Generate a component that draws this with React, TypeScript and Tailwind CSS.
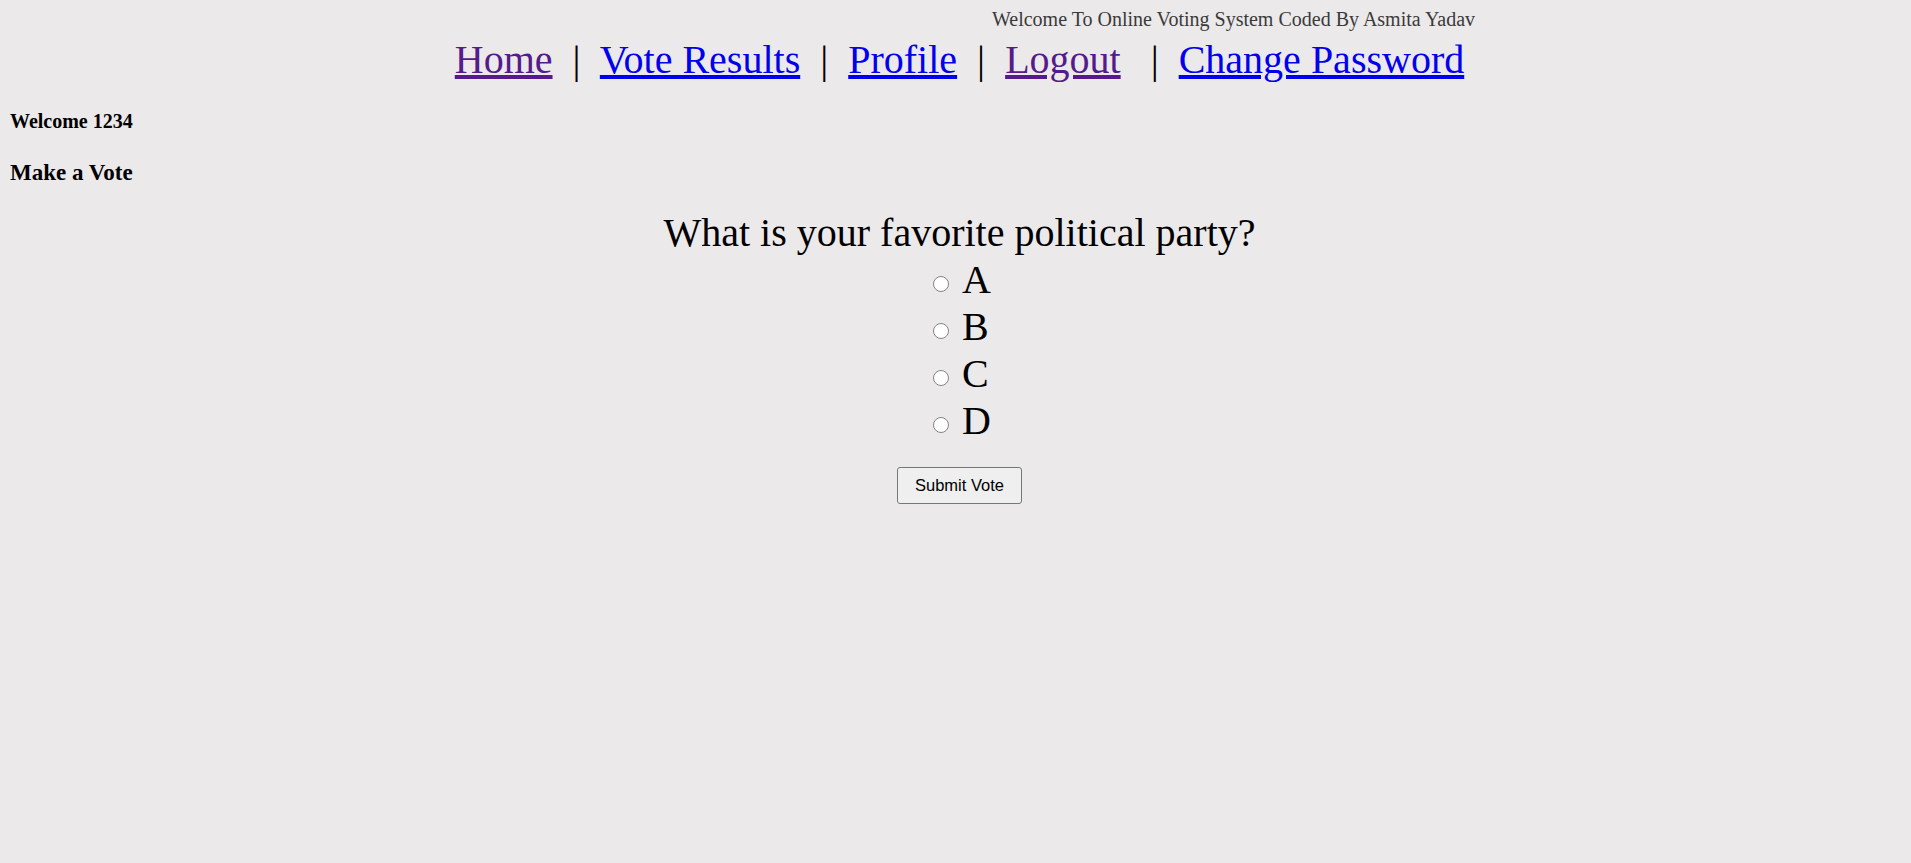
import React from "react";

const options = ["A", "B", "C", "D"];

export default function App() {
  return (
    <div className="min-h-[863px] bg-[#ebe9ea] font-['Liberation_Serif',serif] text-black">
      <div className="pt-[8px] pl-[992px] text-[20px] leading-[23px] text-[#3a3a3a] whitespace-nowrap">
        Welcome To Online Voting System Coded By Asmita Yadav
      </div>
      <nav className="mt-[5px] pl-[8px] text-center text-[40px] leading-[47px] whitespace-pre">
        <a href="#" className="text-[#551a8b] underline">Home</a>
        <span>{"  |  "}</span>
        <a href="#" className="text-[#0000ee] underline">Vote Results</a>
        <span>{"  |  "}</span>
        <a href="#" className="text-[#0000ee] underline">Profile</a>
        <span>{"  |  "}</span>
        <a href="#" className="text-[#551a8b] underline">Logout</a>
        <span>{"   |  "}</span>
        <a href="#" className="text-[#0000ee] underline">Change Password</a>
      </nav>
      <h4 className="mt-[27px] pl-[10px] text-[20px] leading-[23px] font-bold">Welcome 1234</h4>
      <h3 className="mt-[27px] pl-[10px] text-[23px] leading-[26px] font-bold">Make a Vote</h3>
      <form className="mt-[23px] pl-[8px] flex flex-col items-center" onSubmit={(e) => e.preventDefault()}>
        <div className="text-[40px] leading-[47px]">What is your favorite political party?</div>
        <div className="flex flex-col pl-[5px]">
          {options.map((o) => (
            <label key={o} className="flex h-[47px] text-[40px] leading-[47px]">
              <input
                type="radio"
                name="party"
                value={o}
                className="mt-[20px] h-[16px] w-[16px] appearance-none rounded-full border-[1.5px] border-[#858585] bg-white"
              />
              <span className="ml-[13px]">{o}</span>
            </label>
          ))}
        </div>
        <button
          type="submit"
          className="mt-[23px] h-[37px] w-[125px] rounded-[3px] border border-[#767676] bg-[#efefef] font-['Liberation_Sans',sans-serif] text-[16.5px] text-black"
        >
          Submit Vote
        </button>
      </form>
    </div>
  );
}
